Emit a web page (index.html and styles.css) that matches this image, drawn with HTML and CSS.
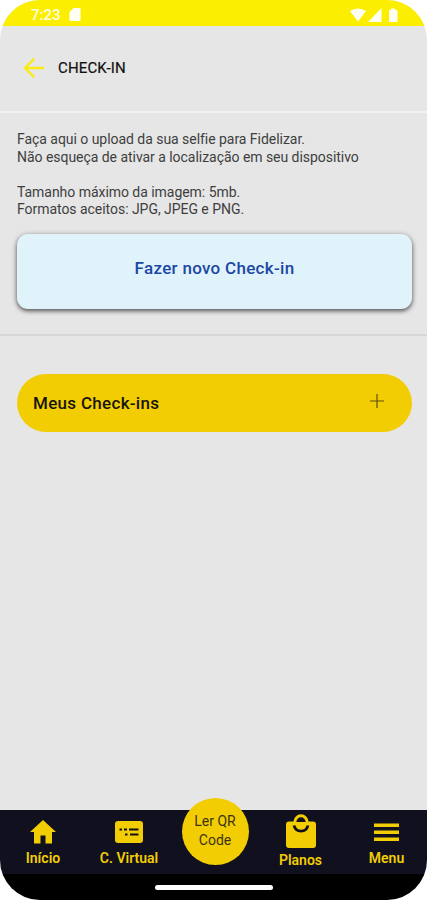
FILE: index.html
```html
<!DOCTYPE html>
<html lang="pt-BR">
<head>
<meta charset="utf-8">
<title>Check-in</title>
<link rel="stylesheet" href="styles.css">
</head>
<body>
<div class="phone">
  <div class="status">
    <span class="time">7:23</span>
    <svg class="sd" width="12" height="13" viewBox="0 0 12 14"><path d="M4.500 0H10.500Q12 0 12 1.500V12.500Q12 14 10.500 14H1.500Q0 14 0 12.500V4.500Z"/></svg>
    <svg class="signals" width="48" height="14" viewBox="0 0 48 14"><path d="M0 3Q8 -2 16 3L8 13.500Z"/><path d="M18 14L31.500 0V14Z"/><path d="M39 2H41V0.500H45V2H47.500V14H39Z"/></svg>
  </div>
  <header class="header">
    <svg class="back" width="22" height="22" viewBox="0 0 22 22"><path d="M21 11H2M11.500 1.500L2 11L11.500 20.500"/></svg>
    <h1 class="title">CHECK-IN</h1>
  </header>
  <section class="upload">
    <p class="info">Faça aqui o upload da sua selfie para Fidelizar.<br>Não esqueça de ativar a localização em seu dispositivo<br><br>Tamanho máximo da imagem: 5mb.<br>Formatos aceitos: JPG, JPEG e PNG.</p>
    <button class="new"><span>Fazer novo Check-in</span></button>
  </section>
  <section class="list">
    <button class="accordion"><span>Meus Check-ins</span><svg width="14" height="14" viewBox="0 0 14 14"><path d="M0 7H14M7 0V14"/></svg></button>
  </section>
  <nav class="nav">
    <a class="item"><svg width="26" height="24" viewBox="0 0 26 24"><path d="M13 0L26 12H22V23.500H15.500V15.500H10.500V23.500H4V12H0Z"/></svg><span>Início</span></a>
    <a class="item virtual"><svg width="28" height="24" viewBox="0 0 28 24"><rect y="1" width="28" height="22" rx="3"/><path class="cut" d="M4.500 9.500H7M9 9.500H12M14 9.500H23.500M10 14.500H12.500M15 14.500H23.500"/></svg><span>C. Virtual</span></a>
    <a class="qr"><span>Ler QR</span><span>Code</span></a>
    <a class="item plans"><svg width="30" height="35" viewBox="0 0 30 35"><rect y="8.500" width="30" height="26.500" rx="3"/><path class="inner" d="M9.500 9A5.500 5.500 0 0 1 20.500 9Z"/><path class="handle" d="M8.800 9.500A6.200 6.700 0 0 1 21.200 9.500"/><path class="smile" d="M8 12.500C10 20 20 20 22 12.500"/></svg><span>Planos</span></a>
    <a class="item menu"><svg width="25" height="24" viewBox="0 0 25 24"><path d="M0 3.500H25V7H0ZM0 10.500H25V14H0ZM0 17.500H25V21H0Z"/></svg><span>Menu</span></a>
  </nav>
  <div class="gesture"><i></i></div>
</div>
</body>
</html>
```
FILE: styles.css
```css
* { box-sizing: border-box; }
body { margin: 0; background: #fff; font-family: Roboto, sans-serif; }
button { border: 0; font: inherit; text-align: left; }
.phone { width: 427px; height: 900px; border-radius: 40px; overflow: hidden; background: #e6e6e6; display: flex; flex-direction: column; }
.status { height: 26px; flex: none; background: #fbee00; display: flex; align-items: center; padding: 3px 29px 0 31px; color: #fffde0; fill: #fffff4; }
.time { font-size: 15px; font-weight: 500; width: 38px; }
.signals { margin-left: auto; }
.header { height: 87px; flex: none; border-bottom: 2px solid #f1f1f1; display: flex; align-items: center; padding: 0 23px 2px; gap: 13px; }
.back { fill: none; stroke: #faec10; stroke-width: 2.300; }
.title { margin: 0; font-size: 15px; font-weight: 400; color: #111; letter-spacing: 0.150px; -webkit-text-stroke: 0.200px #111; }
.upload { height: 223px; flex: none; border-bottom: 2px solid #d7d7d7; padding: 18px 15px 0 17px; }
.info { margin: 0; font-size: 14px; line-height: 17.400px; padding-top: 0.300px; letter-spacing: -0.040px; color: #3e3e3e; white-space: nowrap; }
.new { display: flex; justify-content: center; width: 395px; height: 75px; margin-top: 16px; padding: 24px 0 0; border-radius: 11px; background: #e0f2fa; box-shadow: 0 2px 4px rgba(0,0,0,.55), 0 1px 6px rgba(0,0,0,.2); color: #1c48a4; font-size: 17px; letter-spacing: 0.300px; line-height: 20px; font-weight: 500; }
.list { flex: 1; padding: 38px 15px 0 17px; }
.accordion { display: flex; width: 395px; height: 58px; padding: 0 28px 0 16px; align-items: center; justify-content: space-between; border-radius: 29px; background: #f3cd04; color: #17150a; font-size: 17px; letter-spacing: 0.300px; font-weight: 500; }
.accordion svg { margin-top: -4px; stroke: #5e500b; stroke-width: 1.200; }
.nav { height: 64px; flex: none; background: #10101f; display: grid; grid-template-columns: 86px 86px 86px 85px 84px; color: #f3cd04; fill: #f3cd04; }
.item { display: flex; flex-direction: column; align-items: center; padding-top: 10px; font-size: 14px; line-height: 18px; font-weight: 600; white-space: nowrap; }
.item span { margin-top: 5px; }
.plans { padding-top: 3px; }
.plans span { margin-top: 3px; }
.menu { padding-left: 3px; }
.cut { stroke: #10101f; stroke-width: 2.200; }
.handle { fill: none; stroke: #f3cd04; stroke-width: 3; }
.inner { fill: #10101f; }
.smile { fill: none; stroke: #10101f; stroke-width: 2.800; }
.qr { width: 67px; height: 67px; margin: -12px auto 0; border-radius: 50%; background: #f3cd04; color: #3b340f; display: flex; flex-direction: column; align-items: center; padding-top: 14px; font-size: 14px; line-height: 19px; z-index: 1; }
.gesture { height: 26px; flex: none; background: #000; display: flex; justify-content: center; padding-top: 11px; }
.gesture i { width: 118px; height: 5px; border-radius: 3px; background: #fff; }
```
